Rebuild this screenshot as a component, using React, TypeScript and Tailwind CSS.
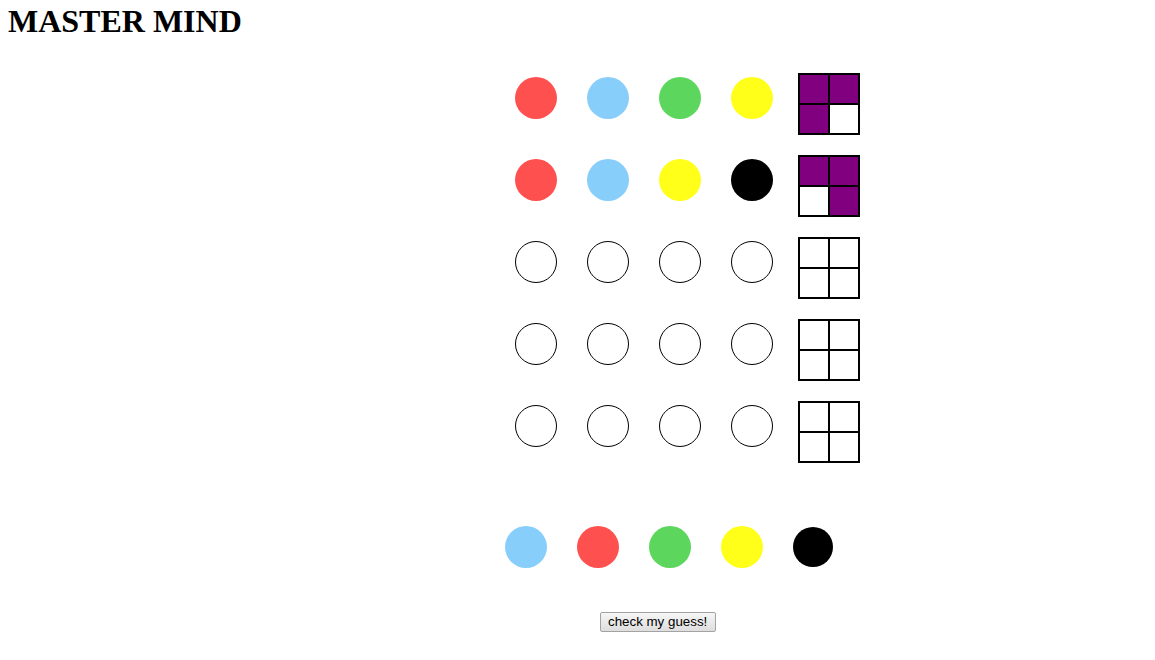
import React from 'react';

const COLORS: Record<string, string> = {
  red: 'bg-[#ff5050]',
  blue: 'bg-[#87cefa]',
  green: 'bg-[#5cd65c]',
  yellow: 'bg-[#ffff1a]',
  black: 'bg-black',
};

const guesses: (string | null)[][] = [
  ['red', 'blue', 'green', 'yellow'],
  ['red', 'blue', 'yellow', 'black'],
  [null, null, null, null],
  [null, null, null, null],
  [null, null, null, null],
];

// feedback pegs: true = purple
const hints: boolean[][] = [
  [true, true, true, false],
  [true, true, false, true],
  [false, false, false, false],
  [false, false, false, false],
  [false, false, false, false],
];

const palette = ['blue', 'red', 'green', 'yellow', 'black'];

const Peg: React.FC<{ color: string | null; className?: string }> = ({ color, className = '' }) =>
  color ? (
    <div className={`w-[42px] h-[42px] rounded-full mx-[15px] ${COLORS[color]} ${className}`} />
  ) : (
    <div className={`w-[42px] h-[42px] rounded-full mx-[15px] border border-black bg-white ${className}`} />
  );

export default function App() {
  return (
    <div className="min-h-[660px] bg-white text-black font-['Liberation_Serif',serif]">
      <h1 className="text-[32px] font-bold leading-[37px] pl-2 pt-[3px]">MASTER MIND</h1>

      {/* Board */}
      <div className="mt-[23px] pl-[500px]">
        {guesses.map((row, i) => (
          <div key={i} className="flex items-start py-[10px]">
            {row.map((c, j) => (
              <Peg key={j} color={c} className="mt-[4px]" />
            ))}
            <div className="ml-[10px] grid grid-cols-2 gap-[2px] p-[2px] bg-black w-[62px] h-[62px]">
              {hints[i].map((on, k) => (
                <div key={k} className={on ? 'bg-[#800080]' : 'bg-white'} />
              ))}
            </div>
          </div>
        ))}
      </div>

      {/* Palette */}
      <div className="mt-[53px] pl-[490px] flex items-center">
        {palette.map((c) =>
          c === 'black' ? (
            <div key={c} className="w-[40px] h-[40px] rounded-full ml-[15px] bg-black" />
          ) : (
            <Peg key={c} color={c} />
          )
        )}
      </div>

      <div className="mt-[41px] pl-[600px]">
        <button className="h-[20px] px-[7px] pr-[8px] border border-[#a3a3a3] rounded-[2px] bg-gradient-to-b from-[#f6f6f6] to-[#dedede] text-[13.33px] leading-[16px] font-['Liberation_Sans',Arial,sans-serif]">
          check my guess!
        </button>
      </div>
    </div>
  );
}
